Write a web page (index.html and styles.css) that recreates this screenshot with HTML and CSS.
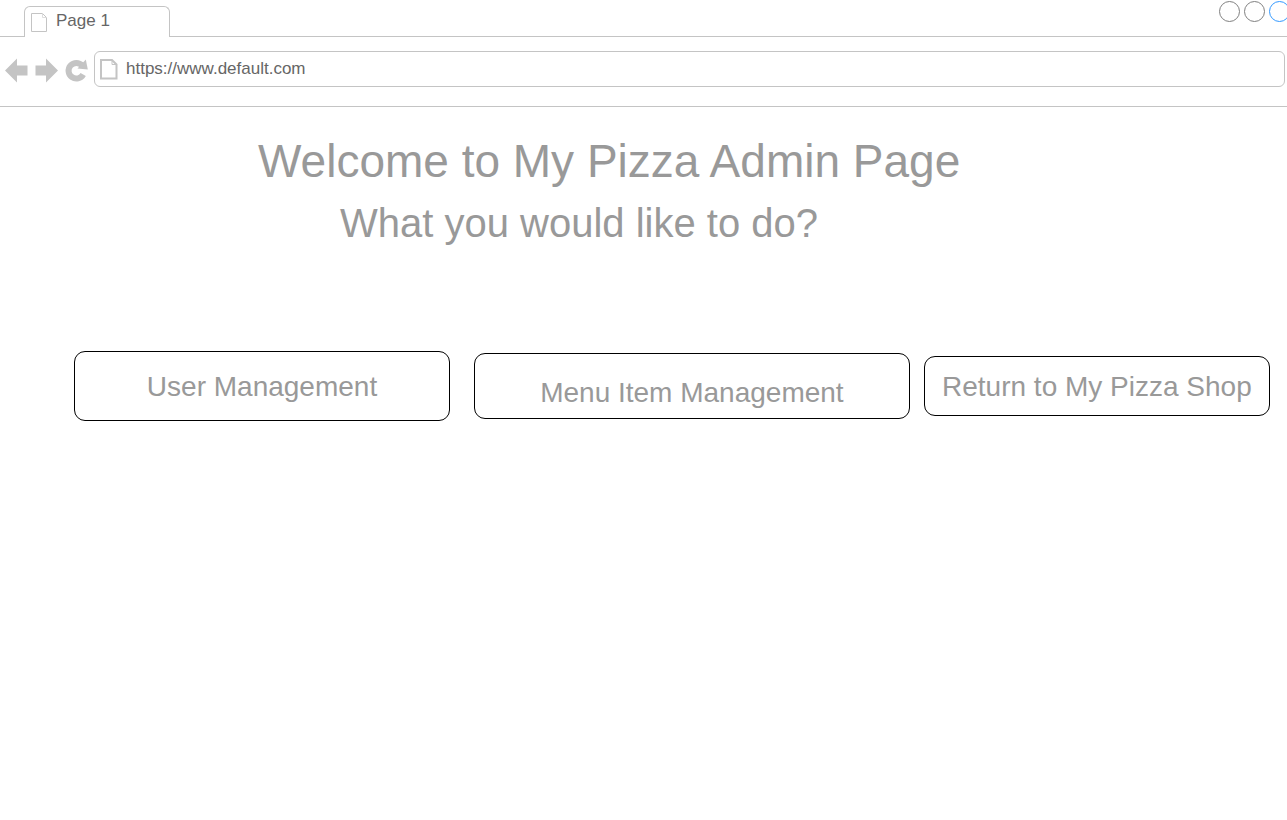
FILE: index.html
```html
<!DOCTYPE html>
<html lang="en">
<head>
<meta charset="utf-8">
<title>My Pizza Admin</title>
<link rel="stylesheet" href="styles.css">
</head>
<body>
<header class="browser">
  <div class="tab-bar">
    <div class="tab">
      <svg class="tab-icon" width="17" height="20" viewBox="0 0 17 20" aria-hidden="true"><path d="M.5 .5H11.500L15.500 4.500V18.500H.5Z" fill="#fff" stroke="#c4c4c4"/><path d="M11.500 .5V4.500H15.500" fill="none" stroke="#ddd"/></svg>
      <span>Page 1</span>
    </div>
    <div class="window-controls">
      <button class="control" type="button" aria-label="Minimize"></button>
      <button class="control" type="button" aria-label="Maximize"></button>
      <button class="control control-close" type="button" aria-label="Close"></button>
    </div>
  </div>
  <div class="toolbar">
    <button class="nav" type="button" aria-label="Back"><svg width="24" height="26" viewBox="0 0 24 26"><path d="M0 13.500L12 1.500V8.500H22.500V18.500H12V25.500Z" fill="#c4c4c4"/></svg></button>
    <button class="nav" type="button" aria-label="Forward"><svg width="24" height="26" viewBox="0 0 24 26"><path d="M23 13.500L11 1.500V8.500H.5V18.500H11V25.500Z" fill="#c4c4c4"/></svg></button>
    <button class="nav" type="button" aria-label="Reload"><svg width="24" height="26" viewBox="0 0 24 26"><path d="M18.200 17.500A7.800 7.800 0 1 1 17.200 8.500" fill="none" stroke="#c4c4c4" stroke-width="6"/><path d="M20.800 2.500L22.800 12.500L12.500 11.500Z" fill="#c4c4c4"/></svg></button>
    <div class="address">
      <svg width="18" height="21" viewBox="0 0 18 21" aria-hidden="true"><path d="M1 1H12L16.500 5.500V19.500H1Z" fill="#fff" stroke="#c4c4c4" stroke-width="2"/><path d="M12 1V5.500H16.500" fill="none" stroke="#c4c4c4"/></svg>
      <input class="address-input" type="text" aria-label="Address" value="https://www.default.com">
    </div>
  </div>
</header>
<main class="page">
  <h1 class="title">Welcome to My Pizza Admin Page</h1>
  <h2 class="subtitle">What you would like to do?</h2>
  <nav class="actions">
    <button class="action action-users" type="button">User Management</button>
    <button class="action action-menu" type="button">Menu Item Management</button>
    <button class="action action-shop" type="button">Return to My Pizza Shop</button>
  </nav>
</main>
</body>
</html>
```
FILE: styles.css
```css
* {
  box-sizing: border-box;
}

body {
  margin: 0;
  overflow-x: hidden;
  background: #fff;
  color: #999;
  font-family: "Liberation Sans", Arial, sans-serif;
}

button,
input {
  margin: 0;
  padding: 0;
  border: 0;
  background: none;
  color: inherit;
  font: inherit;
}

.browser {
  color: #666;
  font-size: 17px;
}

.tab-bar {
  display: flex;
  justify-content: space-between;
  height: 37px;
  padding-left: 24px;
  border-bottom: 1px solid #c4c4c4;
}

.tab {
  display: flex;
  align-items: flex-start;
  gap: 8px;
  width: 146px;
  height: 31px;
  margin-top: 6px;
  padding: 4px 6px;
  border: 1px solid #c4c4c4;
  border-bottom: 0;
  border-radius: 6px 6px 0 0;
  background: #fff;
  line-height: 20px;
}

.tab-icon {
  margin-top: 2px;
}

.window-controls {
  display: flex;
  gap: 4px;
  margin-right: -3px;
  padding-top: 1px;
}

.control {
  width: 21px;
  height: 21px;
  border: 1px solid #808080;
  border-radius: 50%;
}

.control-close {
  border-color: #3399ff;
}

.toolbar {
  display: flex;
  align-items: flex-start;
  gap: 6px;
  height: 70px;
  padding: 14px 2px 0 5px;
  border-bottom: 1px solid #c4c4c4;
}

.nav {
  display: flex;
  margin-top: 6px;
}

.address {
  display: flex;
  flex: 1;
  align-items: center;
  gap: 8px;
  height: 36px;
  margin-left: -1px;
  padding: 0 5px;
  border: 1px solid #c4c4c4;
  border-radius: 6px;
}

.address-input {
  flex: 1;
  min-width: 0;
  line-height: 20px;
}

.page {
  padding: 27px 17px 0 74px;
}

.title,
.subtitle {
  margin: 0;
  font-weight: 400;
  white-space: nowrap;
}

.title {
  padding-left: 184px;
  font-size: 46px;
  line-height: 54px;
}

.subtitle {
  margin-top: 11px;
  padding-left: 266px;
  font-size: 40px;
  line-height: 48px;
}

.actions {
  display: flex;
  align-items: center;
  gap: 14px;
  margin-top: 104px;
}

.action {
  border: 1px solid #000;
  border-radius: 11px;
  font-size: 28px;
  line-height: 32px;
  white-space: nowrap;
}

.action-users {
  flex: 376 1 0;
  height: 70px;
  margin-right: 10px;
  padding-top: 2px;
}

.action-menu {
  flex: 436 1 0;
  height: 66px;
  padding-top: 14px;
}

.action-shop {
  flex: 346 1 0;
  height: 60px;
  padding-top: 2px;
}
```
